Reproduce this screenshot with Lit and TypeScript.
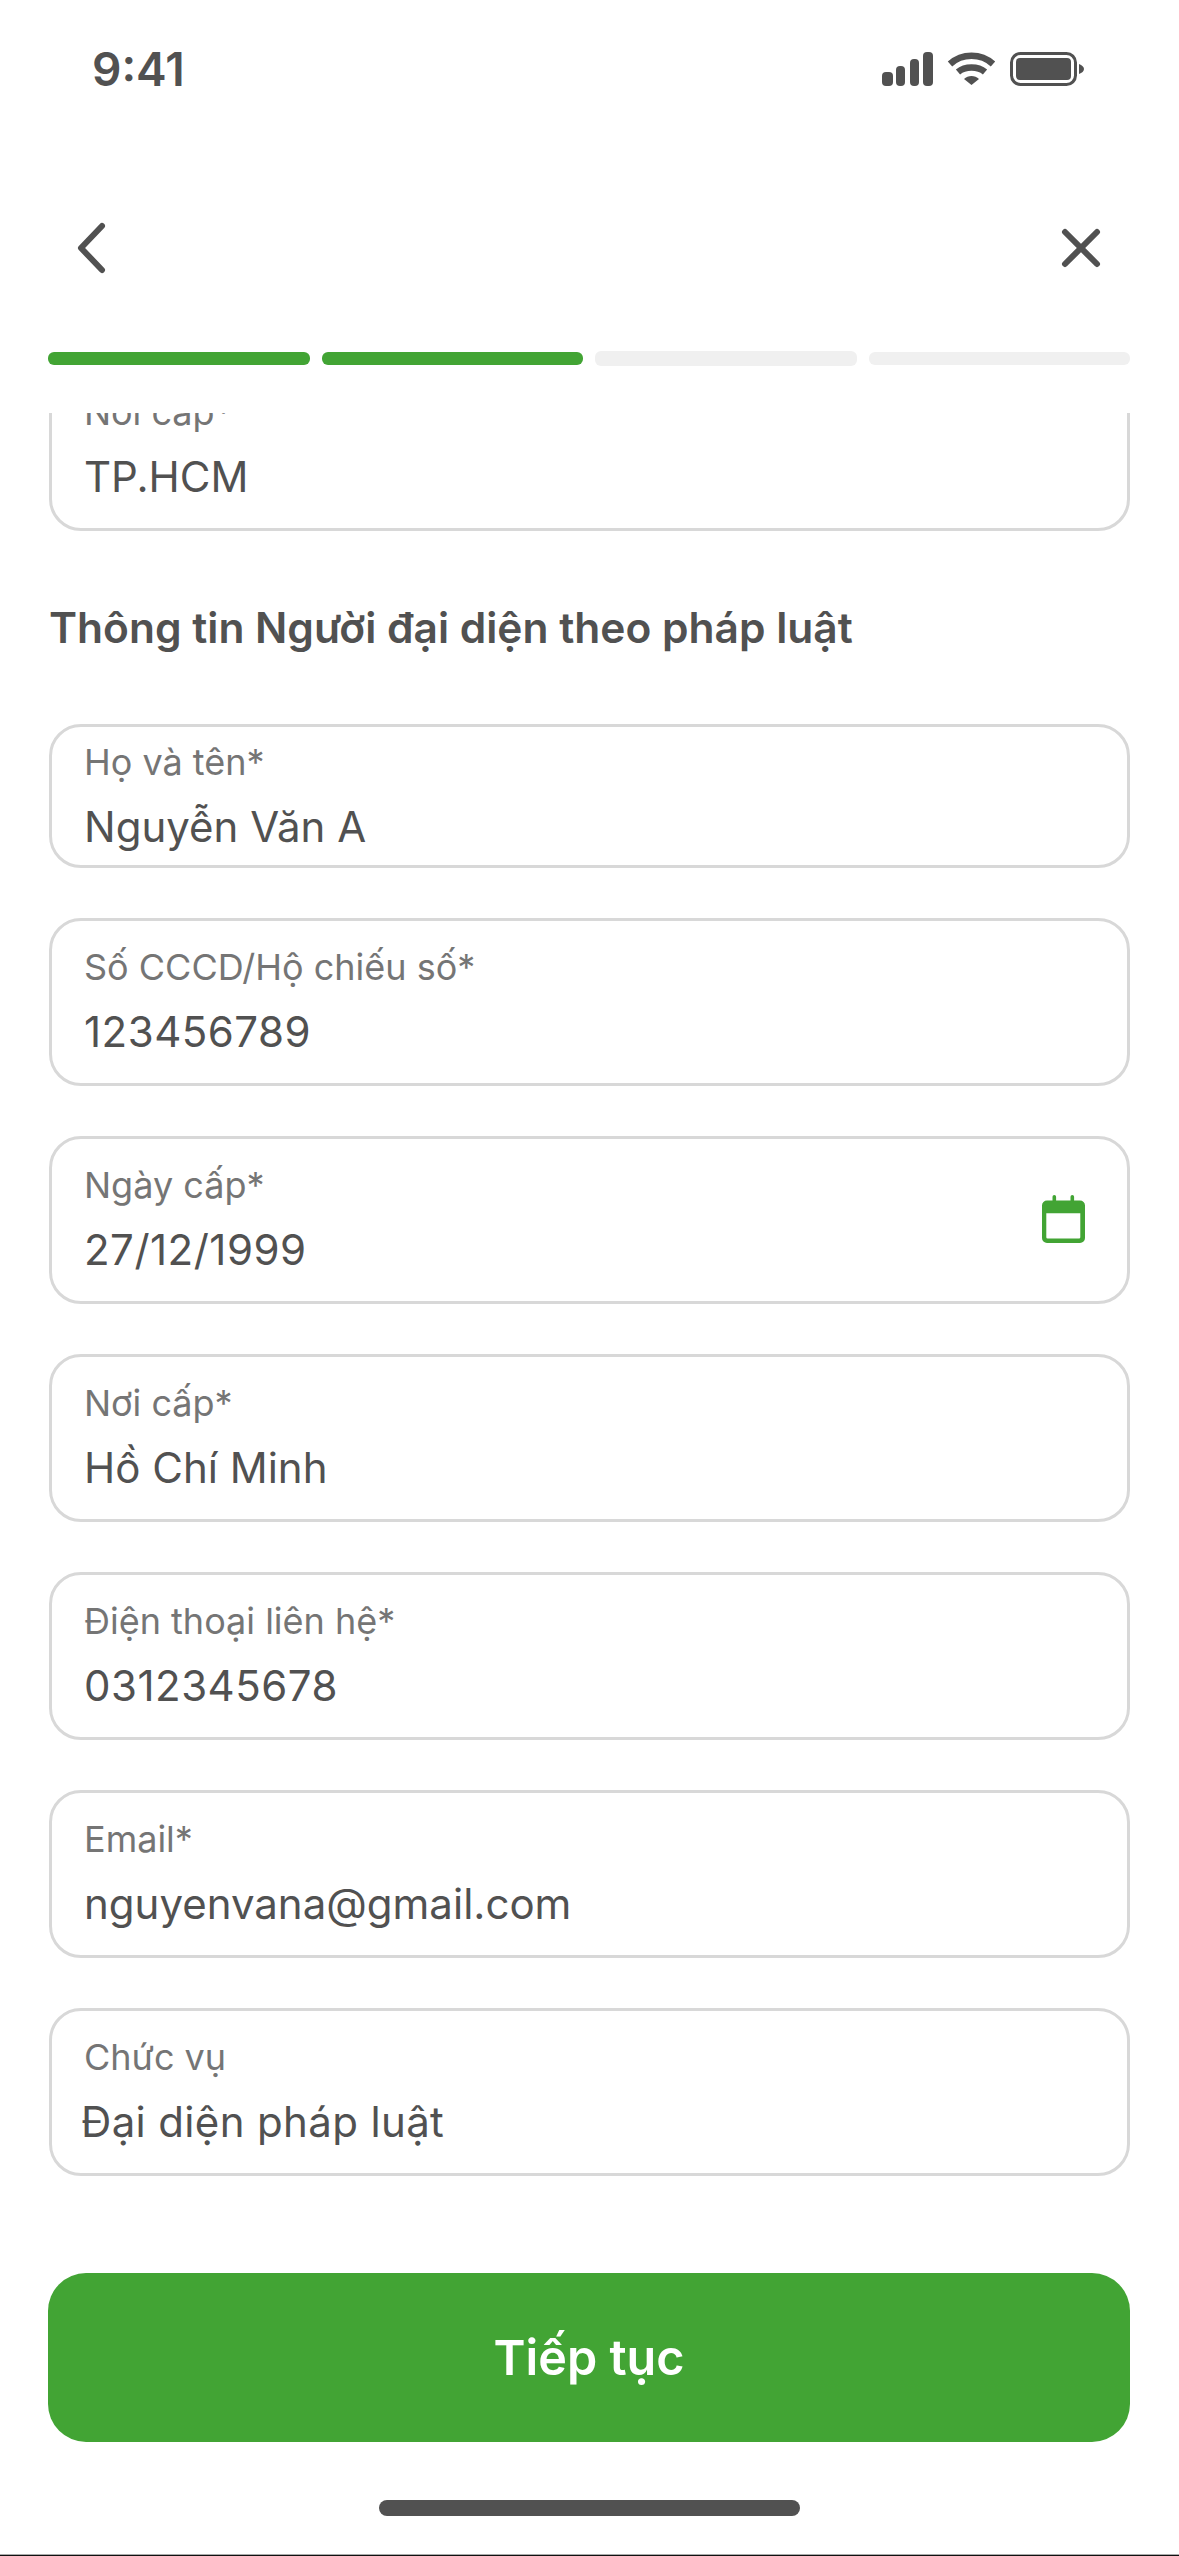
import { LitElement, html, css, svg } from "lit";
import { customElement } from "lit/decorators.js";

const fields = [
  { label: "Họ và tên*", value: "Nguyễn Văn A", short: true },
  { label: "Số CCCD/Hộ chiếu số*", value: "123456789", kind: "num" },
  { label: "Ngày cấp*", value: "27/12/1999", kind: "num", date: true },
  { label: "Nơi cấp*", value: "Hồ Chí Minh" },
  { label: "Điện thoại liên hệ*", value: "0312345678", kind: "num" },
  { label: "Email*", value: "nguyenvana@gmail.com" },
  { label: "Chức vụ", value: "Đại diện pháp luật", kind: "wide" },
];

const calendar = svg`<path d="M12.3 1.8v5M30.3 1.8v5" stroke="#42a434" stroke-width="3.6" stroke-linecap="round"/>
  <path fill="#42a434" fill-rule="evenodd" d="M5 5.6h33a5 5 0 0 1 5 5V43a5 5 0 0 1-5 5H5a5 5 0 0 1-5-5V10.6a5 5 0 0 1 5-5Zm-.7 12.6v24a1.3 1.3 0 0 0 1.3 1.3h31.4a1.3 1.3 0 0 0 1.3-1.3v-24Z"/>`;

@customElement("app-root")
export class AppRoot extends LitElement {
  static styles = css`
    :host {
      display: block;
      width: 1179px;
      height: 2556px;
      background: #fff;
      color: #515151;
      font-family: Inter, "Noto Sans", sans-serif;
      overflow: hidden;
      border-bottom: 1px solid #111;
      box-shadow: inset 0 -1px 0 #aaa;
      box-sizing: border-box;
    }

    .status {
      height: 138px;
      padding: 0 95px 0 92px;
      display: flex;
      justify-content: space-between;
      align-items: center;
      box-sizing: border-box;
    }

    .time {
      font-size: 46px;
      font-weight: 600;
    }

    .nav {
      height: 212px;
      padding: 8px 76px 0;
      display: flex;
      justify-content: space-between;
      align-items: center;
      box-sizing: border-box;
    }

    .nav svg {
      display: block;
      fill: none;
      stroke: #515151;
      stroke-width: 6;
      stroke-linecap: round;
      stroke-linejoin: round;
    }

    .progress {
      height: 16px;
      padding: 0 49px 0 48px;
      display: flex;
      gap: 12px;
      align-items: center;
    }

    .progress span {
      flex: 1;
      height: 13px;
      border-radius: 6px;
      background: #f0f0f0;
    }

    .progress span.done {
      background: #42a434;
    }

    .progress span.tall {
      height: 15px;
    }

    .scroll {
      height: 1860px;
      margin-top: 47px;
      padding: 0 49px;
      overflow: hidden;
    }

    .field {
      position: relative;
      height: 168px;
      margin-bottom: 50px;
      padding: 0 32px 2px;
      border: 3px solid #d8d8d8;
      border-radius: 32px;
      box-sizing: border-box;
      display: flex;
      flex-direction: column;
      justify-content: center;
      gap: 21px;
    }

    .field.short {
      height: 144px;
      padding-bottom: 0;
    }

    .field.clipped {
      height: 167px;
      margin-top: -49px;
      margin-bottom: 0;
    }

    .label {
      font-size: 36px;
      line-height: 40px;
      color: #757575;
    }

    .value {
      font-size: 42px;
      line-height: 48px;
    }

    .value.num {
      letter-spacing: 0.5px;
    }

    .value.wide {
      margin-left: -3px;
      letter-spacing: 0.35px;
    }

    h2 {
      margin: 73px 0 72px;
      font-size: 42.5px;
      line-height: 48px;
      font-weight: 600;
    }

    .cal {
      position: absolute;
      right: 42px;
      top: 56px;
      width: 43px;
      height: 48px;
    }

    .cta {
      margin: 0 49px 0 48px;
      height: 169px;
      border-radius: 38px;
      background: #42a434;
      color: #fff;
      font-size: 48.5px;
      font-weight: 600;
      display: flex;
      align-items: center;
      justify-content: center;
    }

    .home {
      width: 421px;
      height: 16px;
      margin: 58px auto 0;
      border-radius: 8px;
      background: #515151;
    }
  `;

  render() {
    return html`
      <div class="status">
        <span class="time">9:41</span>
        <svg width="202" height="34" viewBox="0 0 202 34" fill="#515151">
          <rect x="0" y="20" width="11" height="14" rx="4"/>
          <rect x="14" y="14" width="9" height="20" rx="4"/>
          <rect x="28" y="7" width="9" height="27" rx="4"/>
          <rect x="41" y="0" width="10" height="34" rx="4"/>
          <path d="M68 12C80 1 99 1 111 12" fill="none" stroke="#515151" stroke-width="6.5"/>
          <path d="M76 20c7-6 20-6 27 0" fill="none" stroke="#515151" stroke-width="6.5"/>
          <path d="M82 27c4-4 11-4 15 0l-7.5 6Z"/>
          <rect x="129.500" y="1.500" width="64" height="31" rx="9" fill="none" stroke="#515151" stroke-width="3"/>
          <rect x="134" y="6" width="55" height="22" rx="4"/>
          <path d="M197 12c3 1 5 3 5 5s-2 4-5 5Z"/>
        </svg>
      </div>
      <div class="nav">
        <svg width="34" height="52" viewBox="0 0 34 52"><path d="M26 4 5 26l21 22"/></svg>
        <svg width="44" height="44" viewBox="0 0 44 44"><path d="M6 6l32 32M38 6 6 38"/></svg>
      </div>
      <div class="progress">
        <span class="done"></span>
        <span class="done"></span>
        <span class="tall"></span>
        <span></span>
      </div>
      <div class="scroll">
        <div class="field clipped">
          <div class="label">Nơi cấp*</div>
          <div class="value">TP.HCM</div>
        </div>
        <h2>Thông tin Người đại diện theo pháp luật</h2>
        ${fields.map(
          (f) => html`
            <div class="field ${f.short ? "short" : ""}">
              <div class="label">${f.label}</div>
              <div class="value ${f.kind ?? ""}">${f.value}</div>
              ${f.date
                ? html`<svg class="cal" viewBox="0 0 43 48">${calendar}</svg>`
                : null}
            </div>
          `
        )}
      </div>
      <div class="cta">Tiếp tục</div>
      <div class="home"></div>
    `;
  }
}
